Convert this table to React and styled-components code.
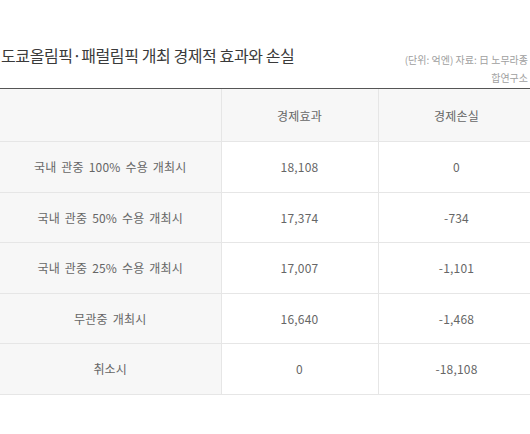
import styled, { createGlobalStyle } from "styled-components";

const GlobalStyle = createGlobalStyle`
  body {
    margin: 0;
    background: #fff;
    font-family: "Noto Sans CJK KR", "Noto Sans", sans-serif;
  }
`;

const Page = styled.div`
  width: 530px;
  height: 434px;
  overflow: hidden;
`;

const Head = styled.div`
  display: flex;
  justify-content: space-between;
  align-items: flex-start;
  width: 530px;
  padding: 43px 2px 1px 0;
  box-sizing: border-box;
  border-bottom: 1px solid #555;
`;

const Title = styled.h3`
  margin: 0;
  padding-left: 1px;
  font-size: 16px;
  font-weight: 400;
  letter-spacing: -0.4px;
  color: #3a3a3a;
  line-height: 24px;
`;

const Source = styled.p`
  margin: 8px 0 0;
  font-size: 10px;
  line-height: 18px;
  color: #a0a0a0;
  text-align: right;
  white-space: nowrap;
`;

const Table = styled.table`
  width: 535px;
  border-collapse: collapse;
  table-layout: fixed;
`;

const Cell = styled.td`
  height: ${(p) => (p.$first ? "52px" : "49.5px")};
  padding: 0;
  border: 1px solid #e6e6e6;
  border-top: ${(p) => (p.$first ? "none" : "1px solid #e6e6e6")};
  text-align: center;
  font-size: 12px;
  letter-spacing: 0.2px;
  word-spacing: 2px;
  color: #666;
  background: ${(p) => (p.$shade ? "#f7f7f7" : "#fff")};
  &:first-child {
    border-left: none;
  }
`;

const rows = [
  ["국내 관중 100% 수용 개최시", "18,108", "0"],
  ["국내 관중 50% 수용 개최시", "17,374", "-734"],
  ["국내 관중 25% 수용 개최시", "17,007", "-1,101"],
  ["무관중 개최시", "16,640", "-1,468"],
  ["취소시", "0", "-18,108"],
];

export default function App() {
  return (
    <Page>
      <GlobalStyle />
      <Head>
        <Title>도쿄올림픽·패럴림픽 개최 경제적 효과와 손실</Title>
        <Source>
          (단위: 억엔) 자료: 日 노무라종
          <br />
          합연구소
        </Source>
      </Head>
      <Table>
        <colgroup>
          <col style={{ width: 221 }} />
          <col style={{ width: 157 }} />
          <col style={{ width: 157 }} />
        </colgroup>
        <tbody>
          <tr>
            <Cell $first $shade />
            <Cell $first $shade>경제효과</Cell>
            <Cell $first $shade>경제손실</Cell>
          </tr>
          {rows.map((r) => (
            <tr key={r[0]}>
              <Cell $shade>{r[0]}</Cell>
              <Cell>{r[1]}</Cell>
              <Cell>{r[2]}</Cell>
            </tr>
          ))}
        </tbody>
      </Table>
    </Page>
  );
}
